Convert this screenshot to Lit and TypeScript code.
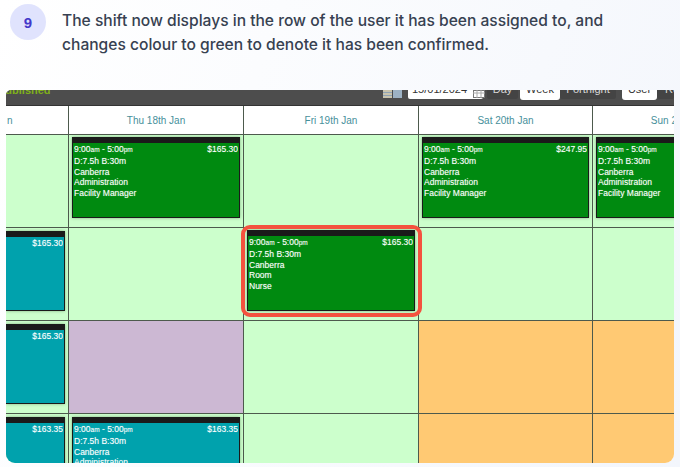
import { LitElement, html, css } from "lit";
import { customElement } from "lit/decorators.js";

type Shift = { kind: "green" | "teal"; price: string; lines: string[]; hl?: boolean };
type Cell = { bg?: "p" | "o"; shift?: Shift };

const admin = ["D:7.5h B:30m", "Canberra", "Administration", "Facility Manager"];
const g = (price: string): Cell => ({ shift: { kind: "green", price, lines: admin } });
const t = (price: string, lines: string[] = admin): Cell => ({ shift: { kind: "teal", price, lines } });

const rows: Cell[][] = [
  [{}, g("$165.30"), {}, g("$247.95"), g("$165.30")],
  [t("$165.30", []), {}, { shift: { kind: "green", price: "$165.30", lines: ["D:7.5h B:30m", "Canberra", "Room", "Nurse"], hl: true } }, {}, {}],
  [t("$165.30", []), { bg: "p" }, {}, { bg: "o" }, { bg: "o" }],
  [t("$163.35", []), t("$163.35"), {}, { bg: "o" }, { bg: "o" }],
];
const days = ["n", "Thu 18th Jan", "Fri 19th Jan", "Sat 20th Jan", "Sun 21st Jan"];

@customElement("app-root")
export class AppRoot extends LitElement {
  static styles = css`
    :host { display: block; width: 680px; height: 467px; overflow: hidden;
      background: linear-gradient(110deg, #ffffff 0%, #f3f6fc 100%); font-family: "Inter", "Liberation Sans", sans-serif; }
    .step { display: flex; gap: 16px; padding: 4px 10px 0; height: 90px; box-sizing: border-box; }
    .badge { width: 36px; height: 36px; border-radius: 50%; background: #e0e3fd; color: #4338ca; flex: none;
      display: flex; align-items: center; justify-content: center; font: 700 15px "Liberation Sans", sans-serif; }
    .text { margin: 5px 0 0; width: 565px; font-size: 15.6px; line-height: 24px; font-weight: 500; color: #374151; }
    .shot { margin: 0 6px; height: 373px; overflow: hidden; border-radius: 5px 0 9px 9px; background: #fff;
      font-family: "Liberation Sans", sans-serif; }
    .bar { height: 16px; box-sizing: border-box; background: #4d4d4d; border-bottom: 1px solid #333; overflow: hidden; }
    .tools { display: flex; align-items: flex-start; margin-top: -10px; font-size: 11px; line-height: 19px; color: #ccc; }
    .status { margin: 1px 0 0 -8px; font-weight: 700; color: #7fb01a; }
    .book { margin: 10px 6px 0 auto; flex: none; display: block; }
    .date { width: 75px; height: 19px; box-sizing: border-box; background: #fff; color: #333; border-radius: 0 0 2px 2px; padding-left: 4px; margin-right: 4px; display: flex; gap: 6px; }
    .cal { margin-top: 10px; flex: none; display: block; }
    .btn { height: 19px; box-sizing: border-box; text-align: center; background: #444; color: #d8d8d8; border-radius: 0 0 2px 2px; flex: none; }
    .btn.on { height: 20px; background: #fff; color: #333; border-radius: 0 0 3px 3px; }
    .day { width: 31px; margin-right: 2px; }
    .week { width: 40px; }
    .fort { width: 56px; margin-right: 6px; }
    .user { width: 35px; }
    .rest { width: 17px; text-align: left; padding-left: 8px; overflow: hidden; }
    .grid { display: grid; grid-template-columns: 63px 175px 175px 174px 175px; grid-template-rows: 29px 93px 93px 93px 93px; }
    .cell { border-right: 1px solid #4d5a4d; border-bottom: 1px solid #4d5a4d; box-sizing: border-box; background: #ccffcc; min-width: 0; padding: 2px 3px 0; }
    .cell.first { padding-left: 0; }
    .cell.p { background: #ccb8d3; }
    .cell.o { background: #ffc973; }
    .head { background: #fff; color: #47909b; font-size: 10px; display: flex; align-items: center; justify-content: center; padding: 0; }
    .head.first { justify-content: flex-start; padding-left: 1px; }
    .shift { position: relative; height: 81px; box-sizing: border-box; border: 1px solid #1a1a1a; border-top-width: 6px; color: #fff; font-size: 8.5px; line-height: 10.8px; padding: 1px 1px; box-shadow: 0 0 3px rgba(0, 40, 0, 0.35); text-shadow: 0 0 1px rgba(255, 255, 255, 0.45); }
    .first .shift { border-left: 0; }
    .shift.green { background: #008a10; }
    .shift.teal { background: #00a2ad; height: 80px; margin-top: 1px; }
    .top { display: flex; justify-content: space-between; }
    .top small { font-size: 6.5px; }
    .ring { position: absolute; z-index: 1; left: -7px; right: -8px; top: -11px; bottom: -7px; border: 4px solid #f4523f; border-radius: 9px; }
    .clip { overflow: hidden; height: 100%; }
  `;

  private shift(s: Shift) {
    return html`<div class="shift ${s.kind}">
      ${s.hl ? html`<div class="ring"></div>` : ""}
      <div class="clip">
        <div class="top">
          <span>${s.lines.length ? html`9:00<small>am</small> - 5:00<small>pm</small>` : ""}</span>
          <span>${s.price}</span>
        </div>
        ${s.lines.map((l) => html`<div>${l}</div>`)}
      </div>
    </div>`;
  }

  render() {
    return html`
      <div class="step">
        <div class="badge">9</div>
        <p class="text">The shift now displays in the row of the user it has been assigned to, and changes colour to green to denote it has been confirmed.</p>
      </div>
      <div class="shot">
        <div class="bar">
          <div class="tools">
            <span class="status">Published</span>
            <svg class="book" width="19" height="8" viewBox="0 0 19 8"><rect width="9" height="8" fill="#c9c4ae"/><rect y="2" width="9" height="1" fill="#8fa3b5"/><rect y="5" width="9" height="1" fill="#8fa3b5"/><rect x="10" width="9" height="8" fill="#9db2c4"/></svg>
            <div class="date">
              <span>15/01/2024</span>
              <svg class="cal" width="12" height="8" viewBox="0 0 12 8"><rect x=".5" y=".5" width="11" height="7" fill="#fff" stroke="#777"/><path d="M0 3h12M4 0v8M8 0v8" stroke="#aaa" fill="none"/></svg>
            </div>
            <div class="btn day">Day</div>
            <div class="btn on week">Week</div>
            <div class="btn fort">Fortnight</div>
            <div class="btn on user">User</div>
            <div class="btn rest">Role</div>
          </div>
        </div>
        <div class="grid">
          ${days.map((d, i) => html`<div class="cell head ${i === 0 ? "first" : ""}">${d}</div>`)}
          ${rows.map((r) => r.map((c, i) => html`<div class="cell ${c.bg ?? ""} ${i === 0 ? "first" : ""}">${c.shift ? this.shift(c.shift) : ""}</div>`))}
        </div>
      </div>`;
  }
}
